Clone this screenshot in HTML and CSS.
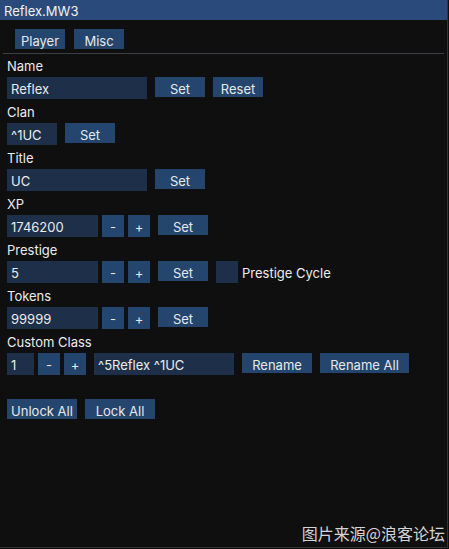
FILE: index.html
```html
<!DOCTYPE html>
<html>
<head>
<meta charset="utf-8">
<link rel="stylesheet" href="styles.css">
</head>
<body>
<div class="window">
  <div class="titlebar">Reflex.MW3</div>
  <div class="content">
    <div class="tabs">
      <div class="btn w50">Player</div>
      <div class="btn w50">Misc</div>
    </div>
    <div class="sep"></div>

    <div class="label">Name</div>
    <div class="row">
      <div class="input w140">Reflex</div>
      <div class="btn w50">Set</div>
      <div class="btn w50">Reset</div>
    </div>

    <div class="label">Clan</div>
    <div class="row">
      <div class="input w50">^1UC</div>
      <div class="btn w50">Set</div>
    </div>

    <div class="label">Title</div>
    <div class="row">
      <div class="input w140">UC</div>
      <div class="btn w50">Set</div>
    </div>

    <div class="label">XP</div>
    <div class="row">
      <div class="step">
        <div class="input w91">1746200</div>
        <div class="btn small">-</div>
        <div class="btn small">+</div>
      </div>
      <div class="btn w50">Set</div>
    </div>

    <div class="label">Prestige</div>
    <div class="row">
      <div class="step">
        <div class="input w91">5</div>
        <div class="btn small">-</div>
        <div class="btn small">+</div>
      </div>
      <div class="btn w50">Set</div>
      <div class="check">
        <div class="box"></div>
        <div class="check-label">Prestige Cycle</div>
      </div>
    </div>

    <div class="label">Tokens</div>
    <div class="row">
      <div class="step">
        <div class="input w91">99999</div>
        <div class="btn small">-</div>
        <div class="btn small">+</div>
      </div>
      <div class="btn w50">Set</div>
    </div>

    <div class="label">Custom Class</div>
    <div class="row">
      <div class="step">
        <div class="input w27">1</div>
        <div class="btn small">-</div>
        <div class="btn small">+</div>
      </div>
      <div class="input w140">^5Reflex ^1UC</div>
      <div class="btn w70">Rename</div>
      <div class="btn w89">Rename All</div>
    </div>

    <div class="spacer"></div>

    <div class="row">
      <div class="btn w70">Unlock All</div>
      <div class="btn w70">Lock All</div>
    </div>
  </div>
  <div class="watermark">图片来源@浪客论坛</div>
</div>
</body>
</html>
```

FILE: styles.css
```css
html, body {
  margin: 0;
  padding: 0;
  background: #0f0f0f;
}

body {
  font-family: Inter, "Noto Sans", "Noto Sans CJK SC", sans-serif;
  font-size: 13px;
  line-height: 16px;
  color: #ececec;
}

.window {
  position: relative;
  width: 447px;
  height: 547px;
  background: #0f0f0f;
  border-right: 1px solid #33333a;
  border-bottom: 1px solid #33333a;
  overflow: hidden;
}

.titlebar {
  height: 20px;
  background: #294a7a;
  color: #f2f2f2;
  padding-left: 4px;
  line-height: 23px;
}

.content {
  display: flex;
  flex-direction: column;
  gap: 4px;
  padding: 9px 6px 0 7px;
}

.tabs {
  display: flex;
  gap: 9px;
  margin-left: 8px;
}

.sep {
  height: 1px;
  background: #3e3e47;
  margin: 0 -3px -1px -4px;
}

.label {
  box-sizing: border-box;
  height: 16px;
  padding-top: 1px;
}

.row {
  display: flex;
  align-items: flex-start;
  gap: 8px;
  height: 22px;
}

.step {
  display: flex;
  gap: 4px;
}

.btn {
  box-sizing: border-box;
  height: 20px;
  padding-top: 4px;
  background: #24456d;
  text-align: center;
  white-space: nowrap;
  overflow: hidden;
  color: #e8e8e8;
}

.btn.small {
  width: 22px;
  height: 22px;
}

.input {
  box-sizing: border-box;
  height: 22px;
  padding: 4px 0 0 4px;
  background: #1d2f49;
  white-space: nowrap;
  overflow: hidden;
}

.w27 { width: 27px; }
.w50 { width: 50px; }
.w70 { width: 70px; }
.w89 { width: 89px; }
.w91 { width: 91px; }
.w140 { width: 140px; }

.check {
  display: flex;
  gap: 4px;
}

.box {
  width: 22px;
  height: 22px;
  background: #1d2f49;
}

.check-label {
  padding-top: 4px;
}

.spacer {
  height: 16px;
}

.watermark {
  position: absolute;
  right: 2px;
  bottom: 4px;
  font-family: "Noto Sans CJK SC", sans-serif;
  font-size: 16px;
  line-height: 20px;
  color: #d4d4d4;
}
```
